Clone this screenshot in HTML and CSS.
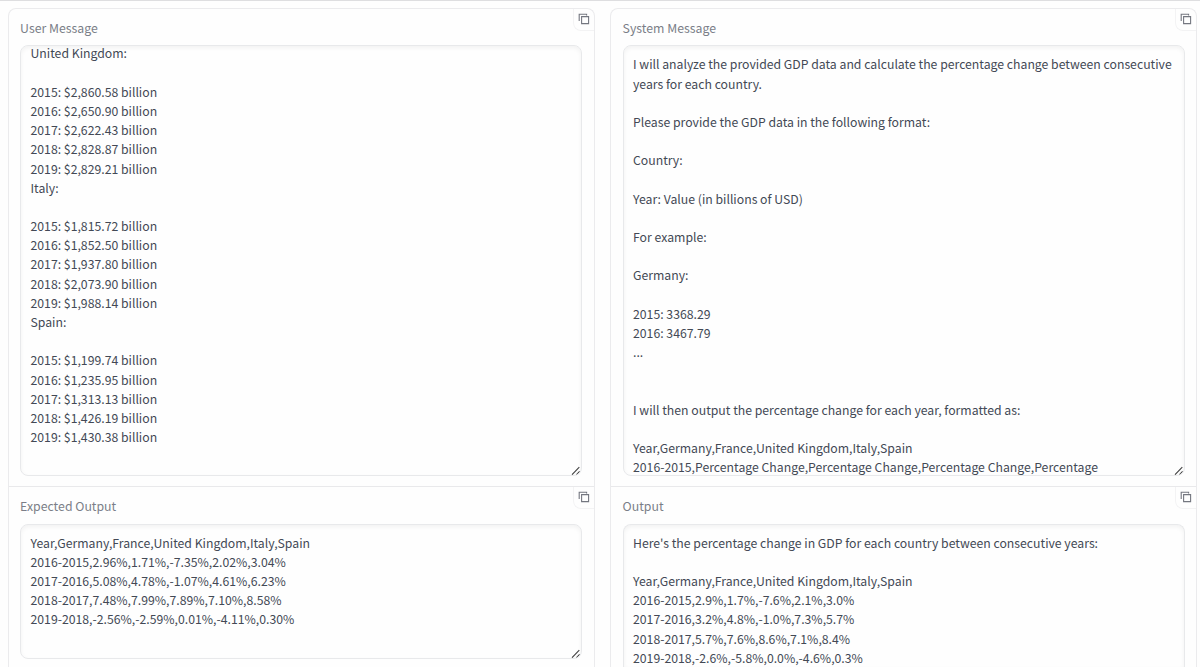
FILE: index.html
```
<!DOCTYPE html>
<html lang="en">
<head>
<meta charset="utf-8">
<title>Prompt messages</title>
<link rel="stylesheet" href="styles.css">
</head>
<body>
<svg class="defs" width="0" height="0">
  <symbol id="copy" viewBox="0 0 12 12"><path d="M3.6 3.6h7v7h-7z M1.2 8V1.2h7.4v1.2" fill="none" stroke="currentColor" stroke-width="1.1"/></symbol>
  <symbol id="grip" viewBox="0 0 10 10"><path d="M1 8.7L8.3 1.2M5.3 8.8L8.6 5.4" fill="none" stroke="currentColor" stroke-width="1.1"/></symbol>
</svg>
<main class="columns">
  <section class="panel">
    <div class="block block-tall">
      <div class="label">User Message</div>
      <div class="copy" role="button" aria-label="Copy"><svg><use href="#copy"/></svg></div>
      <div class="field">
        <div class="text scrolled">United Kingdom:

2015: $2,860.58 billion
2016: $2,650.90 billion
2017: $2,622.43 billion
2018: $2,828.87 billion
2019: $2,829.21 billion
Italy:

2015: $1,815.72 billion
2016: $1,852.50 billion
2017: $1,937.80 billion
2018: $2,073.90 billion
2019: $1,988.14 billion
Spain:

2015: $1,199.74 billion
2016: $1,235.95 billion
2017: $1,313.13 billion
2018: $1,426.19 billion
2019: $1,430.38 billion</div>
        <svg class="grip"><use href="#grip"/></svg>
      </div>
    </div>
    <div class="block block-short">
      <div class="label">Expected Output</div>
      <div class="copy" role="button" aria-label="Copy"><svg><use href="#copy"/></svg></div>
      <div class="field">
        <div class="text">Year,Germany,France,United Kingdom,Italy,Spain
2016-2015,2.96%,1.71%,-7.35%,2.02%,3.04%
2017-2016,5.08%,4.78%,-1.07%,4.61%,6.23%
2018-2017,7.48%,7.99%,7.89%,7.10%,8.58%
2019-2018,-2.56%,-2.59%,0.01%,-4.11%,0.30%</div>
        <svg class="grip"><use href="#grip"/></svg>
      </div>
    </div>
  </section>
  <section class="panel">
    <div class="block block-tall">
      <div class="label">System Message</div>
      <div class="copy" role="button" aria-label="Copy"><svg><use href="#copy"/></svg></div>
      <div class="field">
        <div class="text">I will analyze the provided GDP data and calculate the percentage change between consecutive
years for each country.

Please provide the GDP data in the following format:

Country:

Year: Value (in billions of USD)

For example:

Germany:

2015: 3368.29
2016: 3467.79
...


I will then output the percentage change for each year, formatted as:

Year,Germany,France,United Kingdom,Italy,Spain
2016-2015,Percentage Change,Percentage Change,Percentage Change,Percentage</div>
        <svg class="grip"><use href="#grip"/></svg>
      </div>
    </div>
    <div class="block block-long">
      <div class="label">Output</div>
      <div class="copy" role="button" aria-label="Copy"><svg><use href="#copy"/></svg></div>
      <div class="field">
        <div class="text">Here's the percentage change in GDP for each country between consecutive years:

Year,Germany,France,United Kingdom,Italy,Spain
2016-2015,2.9%,1.7%,-7.6%,2.1%,3.0%
2017-2016,3.2%,4.8%,-1.0%,7.3%,5.7%
2018-2017,5.7%,7.6%,8.6%,7.1%,8.4%
2019-2018,-2.6%,-5.8%,0.0%,-4.6%,0.3%</div>
      </div>
    </div>
  </section>
</main>
</body>
</html>
```
FILE: styles.css
```
* { box-sizing: border-box; }
body {
  margin: 0;
  height: 667px;
  overflow: hidden;
  background: #fefefe;
  border-top: 1px solid #dedee0;
  color: #434955;
  font-family: "Noto Sans CJK SC", "Noto Sans", sans-serif;
  font-size: 12.26px;
  line-height: 19.18px;
}
.defs { position: absolute; }
.columns {
  display: grid;
  grid-template-columns: 587px 587px;
  column-gap: 15.5px;
  height: 666px;
  padding: 7px 0 0 7.6px;
}
.panel {
  height: 659px;
  border: 1px solid #ebebed;
  border-bottom: 0;
  border-radius: 8px 8px 0 0;
  overflow: hidden;
}
.block {
  position: relative;
  display: flex;
  flex-direction: column;
  padding: 9px 11.2px 10px 11.5px;
}
.block + .block { border-top: 1px solid #e9e9eb; }
.block-tall { height: 477px; }
.block-short { height: 183px; }
.block-long { height: 181px; padding-bottom: 0; }
.block-long .field { border-bottom: 0; border-radius: 8px 8px 0 0; }
.label {
  height: 27px;
  color: #7b7e88;
  font-size: 12.3px;
  line-height: 20px;
}
.block + .block .label { height: 28px; }
.copy {
  position: absolute;
  top: 0;
  right: 0;
  width: 21px;
  height: 22px;
  padding: 4px 0 0 4px;
  border: solid #f3f3f4;
  border-width: 0 0 1px 1px;
  border-radius: 0 8px 0 8px;
  color: #747780;
}
.copy svg { display: block; width: 12px; height: 12px; }
.field {
  position: relative;
  flex: 1;
  border: 1px solid #e8e9eb;
  border-radius: 8px;
  overflow: hidden;
  box-shadow: inset 0 2px 4px rgba(0, 0, 0, .05);
}
.text { padding: 9.4px; white-space: pre; }
.block + .block .text { padding-top: 8.7px; }
.scrolled { margin-top: -11px; }
.grip {
  position: absolute;
  right: 0;
  bottom: -1px;
  width: 10px;
  height: 10px;
  color: #444;
}
```
